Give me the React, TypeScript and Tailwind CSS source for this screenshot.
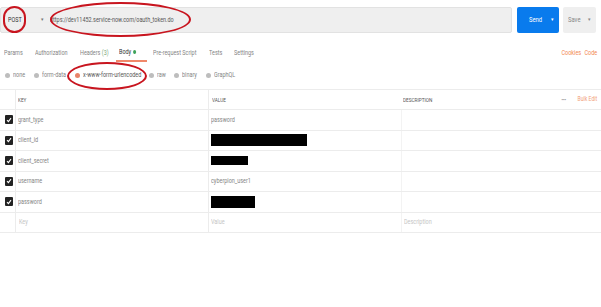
import React from "react";

const T = ({ children, className, right }: { children: React.ReactNode; className?: string; right?: boolean }) => (
  <span className={`inline-block whitespace-nowrap scale-x-[0.78] ${right ? "origin-right" : "origin-left"} ${className ?? ""}`}>
    {children}
  </span>
);

const Check = () => (
  <div className="w-[8px] h-[9px] bg-[#222] rounded-[1px] flex items-center justify-center">
    <svg width="6" height="6" viewBox="0 0 6 6">
      <path d="M1 3.2 L2.4 4.6 L5 1.2" stroke="white" strokeWidth="1.1" fill="none" />
    </svg>
  </div>
);

const Radio = ({ on }: { on?: boolean }) => (
  <span className={`inline-block shrink-0 w-[5px] h-[5px] rounded-full mr-[3px] ${on ? "bg-[#e8836a]" : "bg-[#bdbdbd]"}`} />
);

const rows: { k: string; v?: string; box?: string }[] = [
  { k: "grant_type", v: "password" },
  { k: "client_id", box: "w-[96px] h-[12px]" },
  { k: "client_secret", box: "w-[37px] h-[9px]" },
  { k: "username", v: "cyberpion_user1" },
  { k: "password", box: "w-[44px] h-[12px]" },
];

export default function App() {
  return (
    <div className="relative w-[601px] h-[307px] bg-white overflow-hidden font-['Roboto',sans-serif] text-[7px] text-[#848484]">
      {/* top bar */}
      <div className="flex items-center pt-[7px] pr-[5px]">
        <div className="flex-1 h-[26px] bg-[#efefef] border border-[#e2e2e2] rounded-[2px] flex items-center overflow-hidden">
          <span className="pl-[7px] w-[40px] shrink-0 text-[#333]"><T>POST</T></span>
          <span className="text-[5px] text-[#777] w-[9px] shrink-0">▾</span>
          <span className="w-[300px] shrink-0 text-[#555]"><T>https://dev11452.service-now.com/oauth_token.do</T></span>
        </div>
        <div className="ml-[5px] w-[42px] h-[26px] bg-[#097bed] rounded-[2px] flex items-center text-white">
          <span className="pl-[12px] text-[7.5px] w-[28px]"><T>Send</T></span>
          <span className="ml-auto mr-[5px] text-[5px]">▾</span>
        </div>
        <div className="ml-[4px] w-[33px] h-[26px] bg-[#efefef] rounded-[2px] flex items-center text-[#888]">
          <span className="pl-[5px] text-[7.5px] w-[20px]"><T>Save</T></span>
          <span className="ml-auto mr-[5px] text-[5px]">▾</span>
        </div>
      </div>

      {/* tabs */}
      <div className="flex items-center h-[18px] mt-[11px] pl-[4px] pr-[4px]">
        <span className="w-[31px]"><T>Params</T></span>
        <span className="w-[45px]"><T>Authorization</T></span>
        <span className="w-[39px]"><T>Headers <span className="text-[#7aa87a]">(3)</span></T></span>
        <span className="w-[34px] h-[18px] flex items-center">
          <span className="h-[18px] w-[31px] flex items-center text-[#333] border-b-2 border-[#f0886a] -ml-[3px] pl-[3px]">
            <T>
              Body <span className="inline-block ml-[1px] w-[4px] h-[4px] rounded-full bg-[#3da35a]" />
            </T>
          </span>
        </span>
        <span className="w-[56px]"><T>Pre-request Script</T></span>
        <span className="w-[25px]"><T>Tests</T></span>
        <span className="w-[30px]"><T>Settings</T></span>
        <span className="ml-auto text-[#f2874f]"><T right>Cookies</T></span>
        <span className="ml-[0px] text-[#f2874f]"><T right>Code</T></span>
      </div>

      {/* radio row */}
      <div className="flex items-center h-[12px] mt-[7px] pl-[5px]">
        <span className="w-[29px] flex items-center"><Radio /><T>none</T></span>
        <span className="w-[41px] flex items-center"><Radio /><T>form-data</T></span>
        <span className="w-[74px] flex items-center text-[#555]"><Radio on /><T>x-www-form-urlencoded</T></span>
        <span className="w-[25px] flex items-center"><Radio /><T>raw</T></span>
        <span className="w-[32px] flex items-center"><Radio /><T>binary</T></span>
        <span className="flex items-center"><Radio /><T>GraphQL</T></span>
      </div>

      {/* table */}
      <div className="mt-[8px] border-t border-[#ececec]">
        <div className="flex h-[20px] border-b border-[#ececec] text-[6px] text-[#555]">
          <div className="w-[15px]" />
          <div className="w-[193px] border-l border-[#ececec] flex items-center pl-[2px]"><T>KEY</T></div>
          <div className="w-[193px] border-l border-[#ececec] flex items-center pl-[3px]"><T>VALUE</T></div>
          <div className="flex-1 flex items-center pl-[2px]">
            <T>DESCRIPTION</T>
            <span className="ml-auto text-[#999] text-[6px] tracking-[-0.5px]">•••</span>
            <span className="ml-[6px] mr-[4px] text-[#f2a07a] text-[6.5px]"><T right>Bulk Edit</T></span>
          </div>
        </div>
        {rows.map((r) => (
          <div key={r.k} className="flex h-[20.5px] border-b border-[#ececec]">
            <div className="w-[15px] flex items-center pl-[5px]"><Check /></div>
            <div className="w-[193px] border-l border-[#ececec] flex items-center pl-[2px]"><T>{r.k}</T></div>
            <div className="w-[193px] border-l border-[#ececec] flex items-center pl-[2px]">
              {r.box ? <div className={`bg-black ${r.box}`} /> : <T>{r.v}</T>}
            </div>
            <div className="flex-1 border-l border-[#f3f3f3]" />
          </div>
        ))}
        <div className="flex h-[20.5px] border-b border-[#ececec] text-[#c4c4c4]">
          <div className="w-[15px]" />
          <div className="w-[193px] border-l border-[#ececec] flex items-center pl-[3px]"><T>Key</T></div>
          <div className="w-[193px] border-l border-[#ececec] flex items-center pl-[2px]"><T>Value</T></div>
          <div className="flex-1 border-l border-[#f3f3f3] flex items-center pl-[2px]"><T>Description</T></div>
        </div>
      </div>

      {/* red annotation ellipses */}
      <div className="absolute left-[3px] top-[6px] w-[23px] h-[27px] rounded-full border-2 border-[#c8151f]" />
      <div className="absolute left-[50px] top-[2px] w-[141px] h-[35px] rounded-[50%] border-2 border-[#c8151f]" />
      <div className="absolute left-[67px] top-[62px] w-[80px] h-[28px] rounded-[50%] border-2 border-[#c8151f]" />
    </div>
  );
}
